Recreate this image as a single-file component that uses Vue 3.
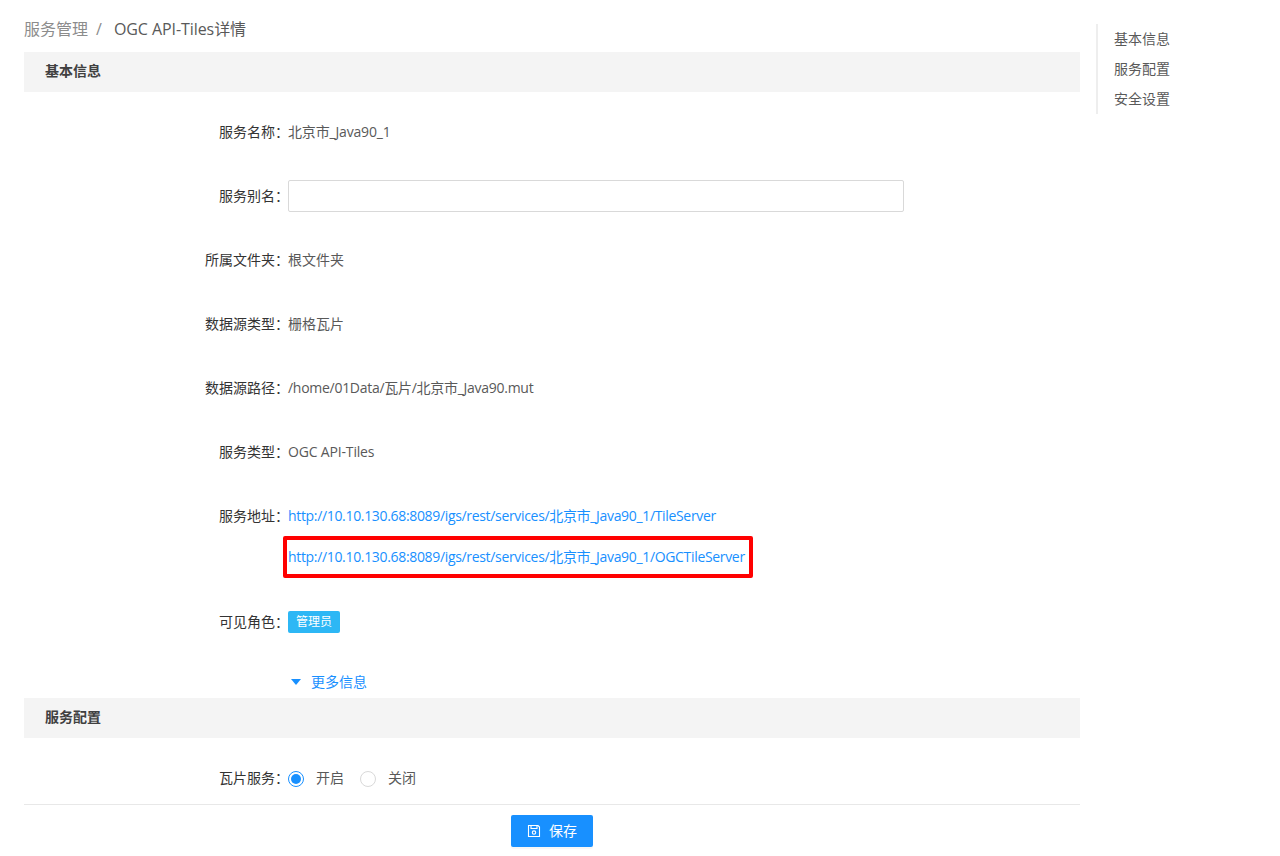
<script setup>
const rows = [
  { label: '所属文件夹', value: '根文件夹', cls: '' },
  { label: '数据源类型', value: '栅格瓦片', cls: '' },
  { label: '数据源路径', value: '/home/01Data/瓦片/北京市_Java90.mut', cls: 'tight' },
  { label: '服务类型', value: 'OGC API-Tiles', cls: 'slight' }
]
const navItems = ['基本信息', '服务配置', '安全设置']
</script>

<template>
  <div class="page">
    <main class="main">
      <div class="crumb"><span class="crumb-parent">服务管理</span><span class="crumb-sep">/</span><span class="crumb-cur">OGC API-Tiles详情</span></div>
      <h2 class="section">基本信息</h2>
      <div class="form first">
        <div class="row"><label>服务名称：</label><span class="val slight">北京市_Java90_1</span></div>
        <div class="row"><label>服务别名：</label><input class="input" type="text" /></div>
        <div v-for="r in rows" :key="r.label" class="row"><label>{{ r.label }}：</label><span class="val" :class="r.cls">{{ r.value }}</span></div>
        <div class="row addr">
          <label>服务地址：</label>
          <a class="link">http://10.10.130.68:8089/igs/rest/services/北京市_Java90_1/TileServer</a>
        </div>
        <div class="row addr2">
          <label></label>
          <a class="link boxed">http://10.10.130.68:8089/igs/rest/services/北京市_Java90_1/OGCTileServer<i class="redbox"></i></a>
        </div>
        <div class="row role"><label>可见角色：</label><span class="tag">管理员</span></div>
        <div class="more">
          <svg class="caret" width="12" height="8" viewBox="0 0 12 8"><path d="M1 1h10L6 7z" fill="#1890ff" /></svg>
          <span>更多信息</span>
        </div>
      </div>
      <h2 class="section">服务配置</h2>
      <div class="form second">
        <div class="row">
          <label>瓦片服务：</label>
          <span class="radio on"></span><span class="radio-text">开启</span>
          <span class="radio"></span><span class="radio-text">关闭</span>
        </div>
      </div>
      <div class="footer">
        <button class="save" type="button">
          <svg width="14" height="14" viewBox="0 0 14 14" fill="none" stroke="#fff" stroke-width="1.1">
            <path d="M1.5 1.5h9.5l1.5 1.5v9.5h-11z" />
            <path d="M4 1.5v3h6v-3" />
            <circle cx="7" cy="8.6" r="1.7" />
          </svg>
          <span>保存</span>
        </button>
      </div>
    </main>
    <nav class="nav">
      <a v-for="n in navItems" :key="n">{{ n }}</a>
    </nav>
  </div>
</template>

<style>
html, body { background: #fff; }
</style>

<style scoped>
.page {
  display: flex;
  align-items: flex-start;
  width: 1280px;
  height: 856px;
  overflow: hidden;
  font-family: "Open Sans", "Noto Sans CJK SC", sans-serif;
  font-size: 14px;
  line-height: 22px;
  color: #595959;
}
.main { width: 1056px; margin-left: 24px; flex: none; }
.crumb { display: flex; align-items: center; height: 52px; padding-top: 5px; box-sizing: border-box; font-size: 16px; }
.crumb-parent { color: #8c8c8c; }
.crumb-sep { margin: 0 12px 0 8px; color: #8c8c8c; }
.crumb-cur { color: #595959; letter-spacing: -0.07px; }
.section {
  margin: 0;
  height: 40px;
  line-height: 38px;
  padding-left: 21px;
  background: #f4f4f4;
  font-size: 14px;
  font-weight: 700;
  color: #404040;
}
.form.first { padding-top: 24px; height: 606px; box-sizing: border-box; }
.form.second { padding-top: 24px; height: 66px; box-sizing: border-box; }
.row { display: flex; align-items: center; height: 32px; margin-bottom: 32px; }
.row label { width: 264px; flex: none; text-align: right; color: #333; position: relative; left: 1px; }
.tight { letter-spacing: -0.28px; }
.slight { letter-spacing: -0.17px; }
.input { width: 616px; height: 32px; box-sizing: border-box; border: 1px solid #d9d9d9; border-radius: 2px; padding: 0 8px; outline: none; background: #fff; }
.link { color: #1890ff; white-space: nowrap; letter-spacing: -0.33px; position: relative; }
.addr { margin-bottom: 9px; }
.addr2 { margin-bottom: 33px; }
.redbox { position: absolute; left: -5px; right: -8px; top: -10px; bottom: -10px; border: 4px solid #f00; border-radius: 2px; box-sizing: border-box; }
.tag { height: 22px; line-height: 22px; padding: 0 8px; background: #2db7f5; color: #fff; font-size: 12px; border-radius: 2px; }
.role { margin-bottom: 27px; }
.more { display: flex; align-items: center; height: 32px; padding-top: 1px; box-sizing: border-box; margin-left: 264px; color: #1890ff; }
.caret { margin: 0 9px 0 2px; }
.radio { width: 16px; height: 16px; box-sizing: border-box; border: 1px solid #d9d9d9; border-radius: 50%; flex: none; margin-right: 12px; position: relative; top: 1px; }
.radio.on { border-color: #1890ff; }
.radio.on::after { content: ""; position: absolute; left: 2px; top: 2px; width: 10px; height: 10px; background: #1890ff; border-radius: 50%; }
.radio-text { margin-right: 16px; color: #595959; }
.footer { border-top: 1px solid #e8e8e8; padding-top: 10px; display: flex; justify-content: center; width: 1056px; box-sizing: border-box; }
.save {
  width: 82px; height: 32px; border: 0; border-radius: 2px; background: #1890ff; color: #fff;
  display: flex; align-items: center; justify-content: center; gap: 8px;
  font: inherit; padding: 0; box-shadow: 0 2px 0 rgba(0, 0, 0, 0.03);
}
.nav { margin: 24px 0 0 16px; border-left: 2px solid #eee; display: flex; flex-direction: column; }
.nav a { height: 30px; line-height: 29px; padding-left: 16px; color: #595959; }
</style>
